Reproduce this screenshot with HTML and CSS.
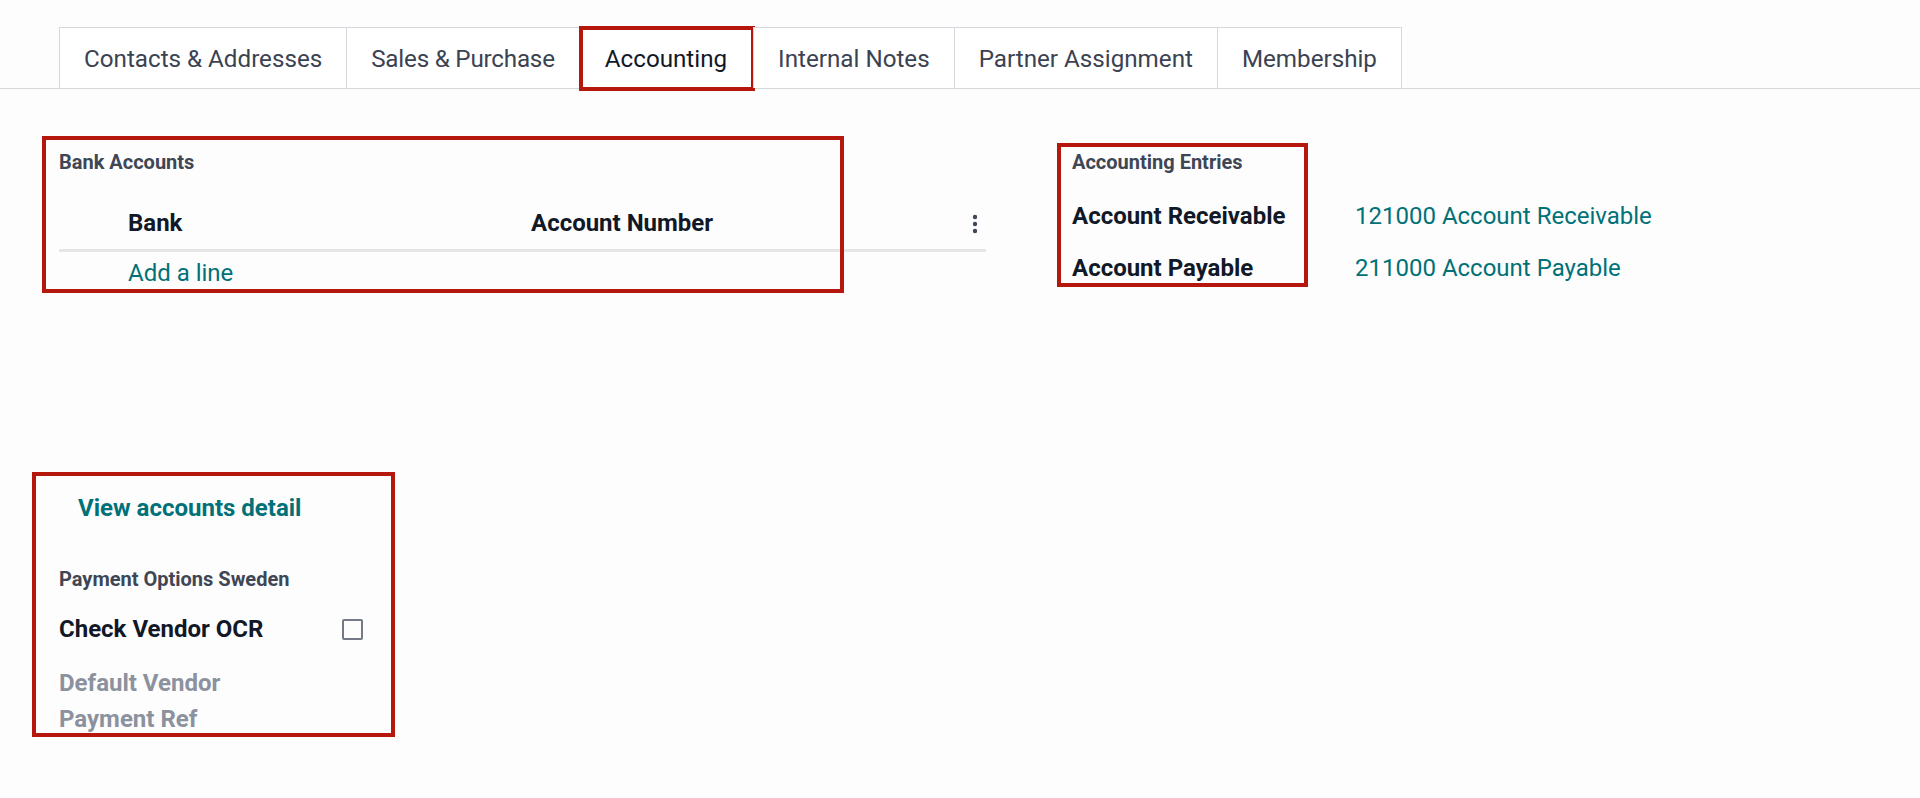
FILE: index.html
```html
<!DOCTYPE html>
<html lang="en">
<head>
    <meta charset="UTF-8">
    <meta name="viewport" content="width=device-width, initial-scale=1.0">
    <title>Contact - Accounting</title>
    <link rel="stylesheet" href="styles.css">
</head>
<body>
    <div class="tabs">
        <div class="tab">Contacts &amp; Addresses</div>
        <div class="tab tab-sales">Sales &amp; Purchase</div>
        <div class="tab active">Accounting<span class="callout callout-tab"></span></div>
        <div class="tab">Internal Notes</div>
        <div class="tab">Partner Assignment</div>
        <div class="tab">Membership</div>
    </div>

    <div class="page">
        <div class="group-row">
            <div class="col-bank">
                <div class="sep-title">Bank Accounts</div>
                <div class="list">
                    <div class="list-head">
                        <div class="cell cell-bank">Bank</div>
                        <div class="cell cell-number">Account Number</div>
                        <div class="cell cell-opts">
                            <svg width="6" height="20" viewBox="0 0 6 20">
                                <circle cx="3" cy="3" r="2.2" fill="#3f4654"/>
                                <circle cx="3" cy="10" r="2.2" fill="#3f4654"/>
                                <circle cx="3" cy="17" r="2.2" fill="#3f4654"/>
                            </svg>
                        </div>
                    </div>
                    <div class="list-add"><a href="#">Add a line</a></div>
                </div>
                <span class="callout callout-bank"></span>
            </div>

            <div class="col-entries">
                <div class="sep-title">Accounting Entries</div>
                <div class="field">
                    <div class="label">Account Receivable</div>
                    <a class="value" href="#">121000 Account Receivable</a>
                </div>
                <div class="field">
                    <div class="label">Account Payable</div>
                    <a class="value" href="#">211000 Account Payable</a>
                </div>
                <span class="callout callout-entries"></span>
            </div>
        </div>

        <div class="payment">
            <a class="btn-link" href="#">View accounts detail</a>
            <div class="sep-title payment-title">Payment Options Sweden</div>
            <div class="field-check">
                <div class="label">Check Vendor OCR</div>
                <span class="checkbox"></span>
            </div>
            <div class="label label-muted">Default Vendor<br>Payment Ref</div>
            <span class="callout callout-payment"></span>
        </div>
    </div>
</body>
</html>
```

FILE: styles.css
```css
body {
    margin: 0;
    font-family: Roboto, "Liberation Sans", sans-serif;
    background-color: #fdfdfd;
    color: #111827;
}
a {
    color: #017178;
    text-decoration: none;
}

/* annotation frames */
.callout {
    position: absolute;
    border: 4px solid #b5170d;
    box-sizing: border-box;
    pointer-events: none;
}
.callout-tab {
    left: -1px;
    top: -2px;
    right: -2px;
    bottom: -3px;
}
.callout-bank {
    left: -17px;
    top: -11px;
    width: 802px;
    height: 157px;
}
.callout-entries {
    left: -15px;
    top: -4px;
    width: 251px;
    height: 144px;
}
.callout-payment {
    left: -27px;
    top: -18px;
    width: 363px;
    height: 265px;
}

/* tabs */
.tabs {
    display: flex;
    margin-top: 27px;
    padding-left: 59px;
    border-bottom: 1px solid #d5d8dc;
}
.tab {
    position: relative;
    padding: 1px 24px 0;
    height: 59px;
    line-height: 60px;
    font-size: 24.2px;
    color: #3b4252;
    border: 1px solid #d5d8dc;
    border-bottom: none;
    margin-right: -1px;
    background-color: #fff;
}
.tab-sales {
    letter-spacing: -0.2px;
}
.tab.active {
    color: #111827;
    padding: 1px 26px 0 25px;
}

/* top groups */
.page {
    padding-left: 59px;
}
.group-row {
    display: flex;
    gap: 86px;
    margin-top: 58px;
}
.sep-title {
    font-size: 20px;
    line-height: 30px;
    font-weight: 700;
    color: #3f4654;
}
.col-bank {
    position: relative;
    width: 927px;
}
.list-head {
    display: flex;
    height: 51px;
    margin-top: 21px;
    border-bottom: 3px solid #e6e6e6;
    font-size: 24px;
    font-weight: 700;
    line-height: 51px;
}
.cell-bank {
    padding-left: 69px;
    width: 403px;
}
.cell-number {
    flex: 1;
}
.cell-opts {
    width: 22px;
    display: flex;
    align-items: center;
    justify-content: center;
}
.list-add {
    margin-top: 3px;
    padding-left: 69px;
    font-size: 24px;
    line-height: 36px;
}

.col-entries {
    position: relative;
}
.col-entries .sep-title {
    margin-bottom: 13px;
}
.field {
    display: flex;
    height: 52px;
    line-height: 52px;
    font-size: 24px;
}
.label {
    width: 283px;
    font-size: 24px;
    font-weight: 700;
    color: #111827;
}
.value {
    color: #017178;
}

/* payment block */
.payment {
    position: relative;
    width: 330px;
    margin-top: 196px;
}
.btn-link {
    display: block;
    padding-left: 19px;
    font-size: 24px;
    font-weight: 700;
    line-height: 36px;
}
.payment-title {
    margin-top: 38px;
}
.field-check {
    display: flex;
    align-items: center;
    height: 36px;
    line-height: 36px;
    margin-top: 17px;
}
.checkbox {
    width: 21px;
    height: 21px;
    box-sizing: border-box;
    border: 2px solid #737985;
    border-radius: 2px;
}
.label-muted {
    margin-top: 18px;
    line-height: 36px;
    color: #8b929d;
}
```
